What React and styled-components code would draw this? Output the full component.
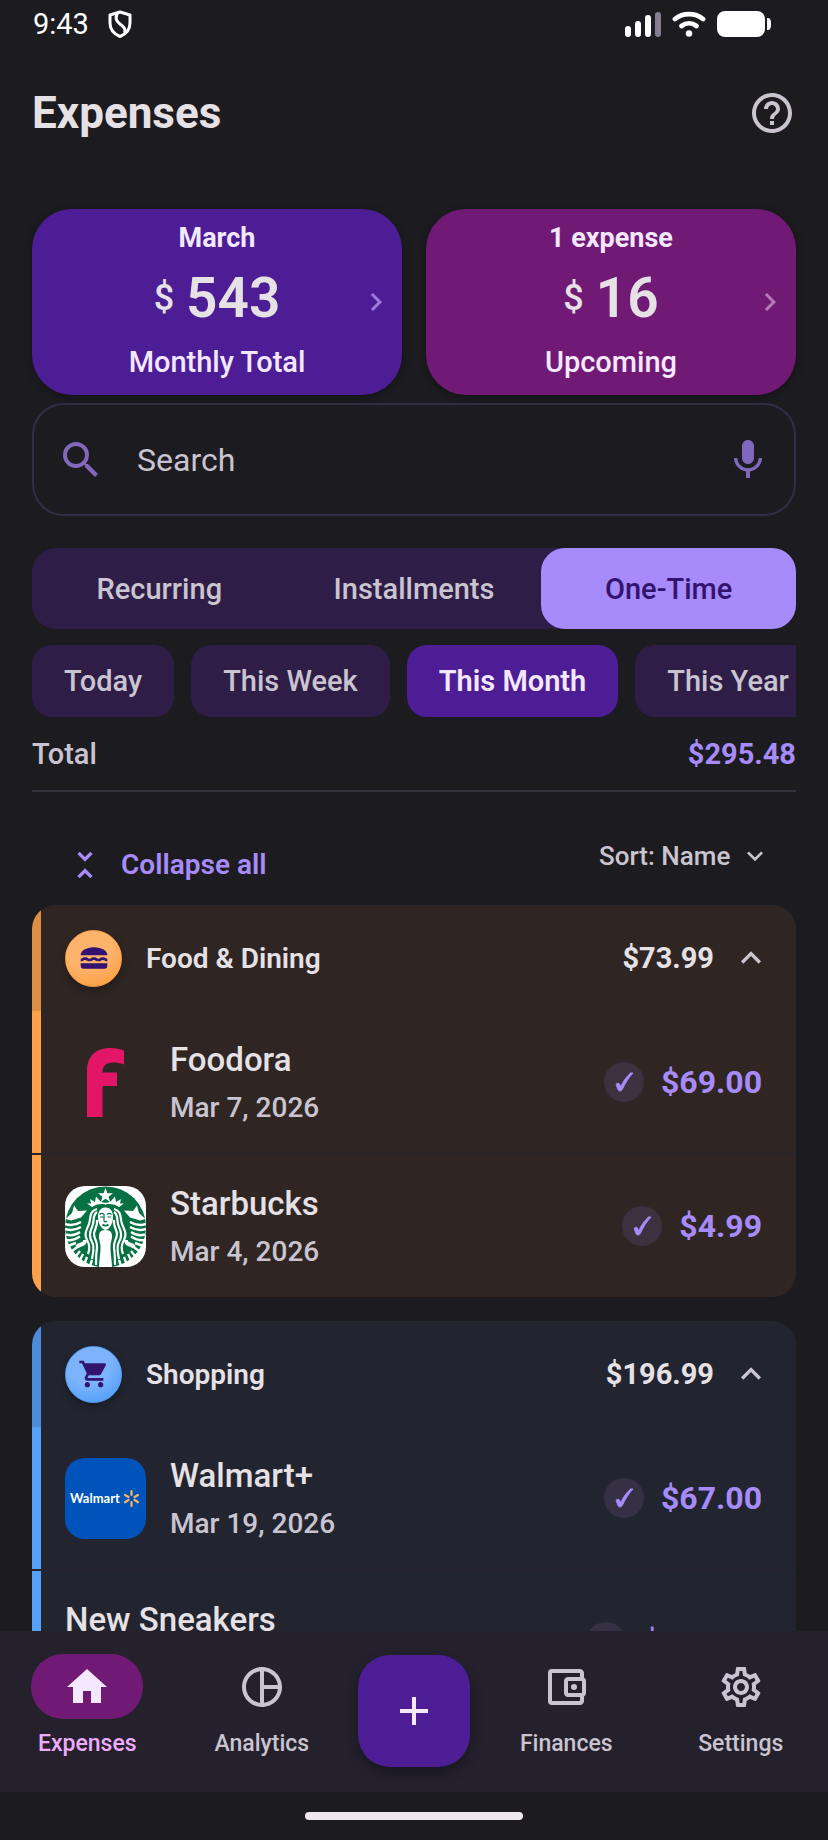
import React, { useState } from 'react';
import styled, { createGlobalStyle } from 'styled-components';
import {
  MdAdd,
  MdChevronRight,
  MdHelpOutline,
  MdHome,
  MdKeyboardArrowDown,
  MdKeyboardArrowUp,
  MdLunchDining,
  MdMic,
  MdOutlineAccountBalanceWallet,
  MdOutlineSettings,
  MdPieChartOutline,
  MdSearch,
  MdShoppingCart,
  MdUnfoldLess,
} from 'react-icons/md';

const tabs = ['Recurring', 'Installments', 'One-Time'];
const ranges = ['Today', 'This Week', 'This Month', 'This Year'];

const groups = [
  {
    name: 'Food & Dining',
    total: '$73.99',
    icon: MdLunchDining,
    color: '#ffa148',
    dim: '#de8f43',
    light: '#fdb36c',
    surface: '#2f2624',
    line: '#27242e',
    items: [
      { name: 'Foodora', date: 'Mar 7, 2026', amount: '$69.00', logo: FoodoraLogo },
      { name: 'Starbucks', date: 'Mar 4, 2026', amount: '$4.99', logo: StarbucksLogo },
    ],
  },
  {
    name: 'Shopping',
    total: '$196.99',
    icon: MdShoppingCart,
    color: '#57a1fb',
    dim: '#4c8cdb',
    light: '#7cb3fb',
    surface: '#222530',
    line: '#28242e',
    items: [
      { name: 'Walmart+', date: 'Mar 19, 2026', amount: '$67.00', logo: WalmartLogo },
      { name: 'New Sneakers', date: 'Mar 2, 2026', amount: '$129.99' },
    ],
  },
];

export default function App() {
  const [tab, setTab] = useState('One-Time');
  const [range, setRange] = useState('This Month');
  const [closed, setClosed] = useState([]);

  const toggleGroup = (name) => {
    setClosed(closed.includes(name) ? closed.filter((n) => n !== name) : [...closed, name]);
  };

  return (
    <Screen>
      <GlobalStyle />
      <StatusBar />
      <Main>
        <Header>
          <Title>Expenses</Title>
          <IconButton type="button" aria-label="Help">
            <MdHelpOutline size={48} />
          </IconButton>
        </Header>

        <Summary>
          <SummaryTile top="March" value="543" label="Monthly Total" color="#4c1d95" arrow="#9b7bdc" />
          <SummaryTile top="1 expense" value="16" label="Upcoming" color="#701a75" arrow="#b47bb8" />
        </Summary>

        <SearchBox>
          <MdSearch size={48} />
          <SearchInput type="search" placeholder="Search" aria-label="Search" />
          <IconButton type="button" aria-label="Voice search" $color="#8268bd">
            <MdMic size={48} />
          </IconButton>
        </SearchBox>

        <Segments>
          {tabs.map((t) => (
            <Segment key={t} type="button" aria-pressed={t === tab} $active={t === tab} onClick={() => setTab(t)}>
              {t}
            </Segment>
          ))}
        </Segments>

        <Chips>
          {ranges.map((r) => (
            <Chip key={r} type="button" aria-pressed={r === range} $active={r === range} onClick={() => setRange(r)}>
              {r}
            </Chip>
          ))}
        </Chips>

        <TotalRow>
          <span>Total</span>
          <TotalValue>$295.48</TotalValue>
        </TotalRow>

        <Toolbar>
          <CollapseButton type="button" onClick={() => setClosed(groups.map((g) => g.name))}>
            <MdUnfoldLess size={40} />
            Collapse all
          </CollapseButton>
          <SortLabel>
            <SortSelect aria-label="Sort expenses" defaultValue="name">
              <option value="name">Sort: Name</option>
              <option value="date">Sort: Date</option>
            </SortSelect>
            <MdKeyboardArrowDown size={32} />
          </SortLabel>
        </Toolbar>

        {groups.map((g) => (
          <Group key={g.name} group={g} open={!closed.includes(g.name)} onToggle={() => toggleGroup(g.name)} />
        ))}
      </Main>

      <Nav>
        <NavItem href="#expenses" $active>
          <NavPill $active><MdHome size={48} /></NavPill>
          Expenses
        </NavItem>
        <NavItem href="#analytics">
          <NavPill><MdPieChartOutline size={48} /></NavPill>
          Analytics
        </NavItem>
        <AddSlot>
          <AddButton type="button" aria-label="Add expense">
            <MdAdd size={48} />
          </AddButton>
        </AddSlot>
        <NavItem href="#finances">
          <NavPill><MdOutlineAccountBalanceWallet size={48} /></NavPill>
          Finances
        </NavItem>
        <NavItem href="#settings">
          <NavPill><MdOutlineSettings size={48} /></NavPill>
          Settings
        </NavItem>
      </Nav>
      <HomeArea>
        <HomeIndicator />
      </HomeArea>
    </Screen>
  );
}

function StatusBar() {
  return (
    <Status>
      <Clock>9:43</Clock>
      <svg width="24" height="28" viewBox="0 0 24 28" fill="none" stroke="#fff" strokeWidth="3" strokeLinejoin="round">
        <path d="M12 2 L22 5 V13 C22 19 18 24 12 26.500 C6 24 2 19 2 13 V5 Z" />
        <path d="M9.500 3.500 C6.500 8 8 11 12 14 C16 17 18 19 16.500 23" />
      </svg>
      <StatusIcons>
        <svg width="36" height="26" viewBox="0 0 36 26" fill="#fff">
          <rect x="0" y="15" width="6" height="11" rx="3" />
          <rect x="10" y="10" width="6" height="16" rx="3" />
          <rect x="20" y="4" width="6" height="22" rx="3" />
          <rect x="30" y="1" width="6" height="25" rx="3" fill="#857e8e" />
        </svg>
        <svg width="34" height="26" viewBox="0 0 34 26" fill="none" stroke="#fff" strokeWidth="4.800" strokeLinecap="round">
          <path d="M3 8 C11 1.500 23 1.500 31 8" />
          <path d="M9.500 15 C14 11.500 20 11.500 24.500 15" />
          <circle cx="17" cy="22.500" r="3.200" fill="#fff" stroke="none" />
        </svg>
        <svg width="54" height="28" viewBox="0 0 54 28" fill="#fff">
          <rect x="0" y="1" width="48" height="26" rx="8" />
          <path d="M50 8 C53 8 54 9 54 14 C54 19 53 20 50 20 Z" />
        </svg>
      </StatusIcons>
    </Status>
  );
}

function SummaryTile(props) {
  const { top, value, label, color, arrow } = props;
  return (
    <Tile type="button" $color={color}>
      <TileBody>
        <TileTop>{top}</TileTop>
        <TileValue><Currency>$</Currency>{value}</TileValue>
        <TileLabel>{label}</TileLabel>
      </TileBody>
      <MdChevronRight size={36} color={arrow} />
    </Tile>
  );
}

function Group(props) {
  const { group, open, onToggle } = props;
  const Icon = group.icon;
  return (
    <GroupCard $surface={group.surface}>
      <GroupHeader type="button" aria-expanded={open} $bar={group.dim} onClick={onToggle}>
        <CategoryBadge $color={group.color} $light={group.light}>
          <Icon size={32} />
        </CategoryBadge>
        <GroupName>{group.name}</GroupName>
        <GroupTotal>{group.total}</GroupTotal>
        {open ? <MdKeyboardArrowUp size={40} /> : <MdKeyboardArrowDown size={40} />}
      </GroupHeader>
      {open ? group.items.map((item, i) => {
        const Logo = item.logo;
        return (
          <React.Fragment key={item.name}>
            {i > 0 ? <Divider $line={group.line} /> : null}
            <Row $bar={group.color}>
              {Logo ? <LogoBox><Logo /></LogoBox> : null}
              <RowText>
                <RowName>{item.name}</RowName>
                <RowDate>{item.date}</RowDate>
              </RowText>
              <Paid>
                <svg width="20" height="22" viewBox="0 0 20 22" fill="currentColor" stroke="currentColor" strokeWidth="1" role="img" aria-label="Paid">
                  <path d="M2 13.500 C3.500 11.800 5.200 11.800 5.700 13.500 L6.700 16 C9 10.500 12.500 5.500 16.500 2 L19 2 C14.500 6.800 11 12.500 8.300 18.500 C7.500 20.300 4.700 20.400 4.100 18.700 Z" />
                </svg>
              </Paid>
              <RowAmount>{item.amount}</RowAmount>
            </Row>
          </React.Fragment>
        );
      }) : null}
    </GroupCard>
  );
}

function FoodoraLogo() {
  return (
    <svg width="81" height="81" viewBox="0 0 81 81" fill="#e21566">
      <path d="M22 29 C22 13 32 6 46 6 C51 6 55 7 59 8.500 V22.500 C55 21 51 20.500 48 20.500 C41 20.500 37.500 24 37.500 30.500 H52 V44 H37.500 V75 H22 Z" />
    </svg>
  );
}

// left half of the siren, mirrored for the right one
function SirenHalf() {
  return (
    <g>
      <path d="M9 19.500 L13 25 L22 24.500 L16 31.500 L6 34.500 L0.500 33 L7 27 Z" fill="#fff" stroke="none" />
      <path d="M0 38 C6 40 11 39 16 36" />
      <path d="M0 43 C6 45 11 44 16 41" />
      <path d="M1 48.500 C6 50 11 49 15 46" />
      <path d="M2 54 C7 55 11 53 15 50.500" />
      <path d="M4 59.500 L11 57 M7 65 L13 60.500 M11 70 L15 65 M15 74 L18 68 M19.500 77.500 L22 71 M25 80 L27 74" />
      <path d="M12 61 C15 57 20 60 20 54" strokeWidth="4" />
      <path d="M32 23 C24 25 26 32 24 38 C21 45 19 48 22 54 C25 59 25 63 23 68" strokeWidth="2.200" />
      <path d="M32 26 C27 29 30 35 27 41 C24 47 24 51 27 56 C30 61 28 67 27 73" strokeWidth="2.200" />
      <path d="M32 34 C33 40 29 44 29 48 C29 53 33 56 32 62 C31 68 31 73 31 79" strokeWidth="2.200" />
      <path d="M27 21 L22 17.500 L26 17.500 L25 13 L30 16 L31 10.500 L35 15 L38 16.500 L41 17 V18.500 C35 17.500 31 18.500 27 21 Z" fill="#fff" stroke="none" />
    </g>
  );
}

function StarbucksLogo() {
  return (
    <svg width="81" height="81" viewBox="0 0 81 81">
      <rect width="81" height="81" fill="#fff" />
      <circle cx="40.500" cy="41" r="40.500" fill="#067143" />
      <g fill="none" stroke="#fff" strokeWidth="2.400">
        <SirenHalf />
        <g transform="translate(81 0) scale(-1 1)"><SirenHalf /></g>
      </g>
      <path d="M40.500 2 L42.400 7.300 H48 L43.500 10.700 L45.200 16 L40.500 12.800 L35.800 16 L37.500 10.700 L33 7.300 H38.600 Z" fill="#fff" />
      <path d="M40.500 21.500 C46 21.500 48 26 48 31 C48 37 45 43 40.500 44 C36 43 33 37 33 31 C33 26 35 21.500 40.500 21.500 Z" fill="#fff" />
      <path d="M36 45 C39 43.500 42 43.500 45 45 C49 49 46 55 45.500 59 C45 66 47 74 47 81 H34 C34 74 36 66 35.500 59 C35 55 32 49 36 45 Z" fill="#fff" />
      <g fill="none" stroke="#067143" strokeWidth="1.200">
        <path d="M34.500 28.500 C36 27 38 27 39 28.500 V35 C40 36 41 36 42 35" />
        <path d="M42 28.500 C43.500 27 45 27 46.500 28.500" />
        <path d="M35 31 H38.500 M42.500 31 H46" />
        <path d="M37.500 38.500 C39.500 40 41.500 40 43.500 38.500" strokeWidth="1.600" />
      </g>
    </svg>
  );
}

function WalmartLogo() {
  return (
    <svg width="81" height="81" viewBox="0 0 81 81">
      <rect width="81" height="81" fill="#0053bb" />
      <text x="5" y="45" fill="#fff" fontFamily='Lato, "Noto Sans", sans-serif' fontSize="13" fontWeight="700">Walmart</text>
      <g stroke="#f7b55d" strokeWidth="2.200" strokeLinecap="round">
        <path d="M66.500 33 V37 M66.500 44 V48 M60 37 L63.500 39 M69.500 42 L73 44.200 M73 37 L69.500 39 M63.500 42 L60 44.200" />
      </g>
    </svg>
  );
}

const GlobalStyle = createGlobalStyle`
  * {
    box-sizing: border-box;
  }
  body {
    margin: 0;
    background: #1c1b1f;
    color: #e6e1e5;
    font-family: Roboto, "Liberation Sans", sans-serif;
  }
  button, input, select {
    font-family: inherit;
  }
  svg {
    display: block;
    flex: none;
  }
`;

const Screen = styled.div`
  display: flex;
  flex-direction: column;
  height: 100vh;
  overflow: hidden;
`;

const Status = styled.div`
  display: flex;
  align-items: center;
  flex: none;
  height: 48px;
  padding: 0 57px 0 33px;
  color: #fff;
`;

const Clock = styled.span`
  margin-right: 19px;
  font-size: 29px;
  line-height: 32px;
`;

const StatusIcons = styled.div`
  display: flex;
  align-items: center;
  gap: 11px;
  margin-left: auto;
`;

const Main = styled.main`
  flex: 1;
  min-height: 0;
  padding: 0 32px;
  overflow: hidden;
`;

const Header = styled.header`
  display: flex;
  align-items: center;
  justify-content: space-between;
  height: 130px;
  margin-bottom: 31px;
`;

const Title = styled.h1`
  margin: 0;
  font-size: 44px;
  line-height: 52px;
  font-weight: 700;
`;

const IconButton = styled.button`
  padding: 0;
  border: 0;
  background: none;
  color: ${(p) => p.$color || '#cac4d0'};
`;

const Summary = styled.section`
  display: flex;
  gap: 24px;
`;

const Tile = styled.button`
  display: grid;
  grid-template-columns: 36px 1fr 36px;
  align-items: center;
  flex: 1;
  padding: 8px;
  border: 0;
  border-radius: 40px;
  background: ${(p) => p.$color};
  color: #f3e8ff;
  box-shadow: 0 2px 8px rgba(0, 0, 0, 0.35);
`;

const TileBody = styled.span`
  display: flex;
  flex-direction: column;
  align-items: center;
  grid-column: 2;
`;

const TileTop = styled.span`
  font-size: 27px;
  line-height: 42px;
  font-weight: 700;
`;

const TileValue = styled.span`
  display: flex;
  align-items: center;
  gap: 12px;
  color: #e6e1e5;
  font-size: 55px;
  line-height: 78px;
  font-weight: 600;
`;

const Currency = styled.span`
  font-size: 36px;
  font-weight: 500;
`;

const TileLabel = styled.span`
  font-size: 29px;
  line-height: 50px;
  font-weight: 500;
`;

const SearchBox = styled.div`
  display: flex;
  align-items: center;
  gap: 32px;
  height: 113px;
  margin-top: 8px;
  padding: 0 22px 0 23px;
  border: 2px solid #332e45;
  border-radius: 32px;
  color: #8268bd;
`;

const SearchInput = styled.input`
  flex: 1;
  min-width: 0;
  padding: 0;
  border: 0;
  outline: 0;
  background: none;
  color: #e6e1e5;
  font-size: 32px;
  line-height: 40px;

  &::placeholder {
    color: #cac4d0;
    opacity: 1;
  }
`;

const Segments = styled.div`
  display: flex;
  margin-top: 32px;
  border-radius: 24px;
  background: #2d1d47;
`;

const Segment = styled.button`
  flex: 1 1 0;
  height: 81px;
  padding: 0;
  border: 0;
  border-radius: 24px;
  background: ${(p) => (p.$active ? '#a78bfa' : 'transparent')};
  color: ${(p) => (p.$active ? '#32136f' : '#cac4d0')};
  font-size: 29px;
  font-weight: 500;
`;

const Chips = styled.div`
  display: flex;
  gap: 17px;
  margin-top: 16px;
  overflow: hidden;
`;

const Chip = styled.button`
  flex: none;
  height: 72px;
  padding: 0 32px;
  border: 0;
  border-radius: 20px;
  background: ${(p) => (p.$active ? '#4c1d95' : '#2d1d47')};
  color: ${(p) => (p.$active ? '#f3e8ff' : '#cac4d0')};
  font-size: 29px;
  font-weight: ${(p) => (p.$active ? 600 : 500)};
`;

const TotalRow = styled.div`
  display: flex;
  align-items: center;
  justify-content: space-between;
  height: 75px;
  border-bottom: 2px solid #34303c;
  color: #cac4d0;
  font-size: 29px;
  font-weight: 500;
`;

const TotalValue = styled.strong`
  color: #a78bfa;
  font-weight: 700;
`;

const Toolbar = styled.div`
  display: flex;
  align-items: flex-start;
  justify-content: space-between;
  padding: 32px 25px 0 33px;
`;

const CollapseButton = styled.button`
  display: flex;
  align-items: center;
  gap: 16px;
  height: 81px;
  padding: 0;
  border: 0;
  background: none;
  color: #a78bfa;
  font-size: 28px;
  font-weight: 600;
`;

const SortLabel = styled.label`
  display: flex;
  align-items: center;
  gap: 8px;
  height: 64px;
  color: #cac4d0;
`;

const SortSelect = styled.select`
  padding: 0;
  border: 0;
  appearance: none;
  background: none;
  color: inherit;
  font-size: 26px;
  font-weight: 500;
`;

const GroupCard = styled.section`
  margin-bottom: 24px;
  border-radius: 24px;
  background: ${(p) => p.$surface};
  overflow: hidden;
`;

const GroupHeader = styled.button`
  display: flex;
  align-items: center;
  width: 100%;
  height: 106px;
  padding: 0 25px 0 24px;
  border: 0;
  border-left: 9px solid ${(p) => p.$bar};
  background: none;
  color: #cac4d0;
  text-align: left;
`;

const CategoryBadge = styled.span`
  display: flex;
  align-items: center;
  justify-content: center;
  width: 57px;
  height: 57px;
  border: 1px solid ${(p) => p.$color};
  border-radius: 50%;
  background: radial-gradient(circle at 40% 25%, ${(p) => p.$light} 0, ${(p) => p.$light} 45%, ${(p) => p.$color} 80%);
  color: #32136f;
  box-shadow: 0 4px 8px rgba(0, 0, 0, 0.3);
`;

const GroupName = styled.span`
  flex: 1;
  margin-left: 24px;
  color: #e6e1e5;
  font-size: 28px;
  font-weight: 600;
`;

const GroupTotal = styled.span`
  margin-right: 17px;
  color: #e6e1e5;
  font-size: 29px;
  font-weight: 700;
`;

const Divider = styled.div`
  height: 2px;
  background: ${(p) => p.$line};
`;

const Row = styled.article`
  display: flex;
  align-items: center;
  height: 142px;
  padding: 0 34px 0 24px;
  border-left: 9px solid ${(p) => p.$bar};
`;

const LogoBox = styled.div`
  flex: none;
  margin-right: 24px;
  border-radius: 20px;
  overflow: hidden;
`;

const RowText = styled.div`
  flex: 1;
`;

const RowName = styled.div`
  font-size: 33px;
  line-height: 52px;
  font-weight: 500;
`;

const RowDate = styled.div`
  color: #cac4d0;
  font-size: 28px;
  line-height: 44px;
  font-weight: 500;
`;

const Paid = styled.span`
  display: flex;
  align-items: center;
  justify-content: center;
  width: 40px;
  height: 40px;
  margin-right: 17px;
  border-radius: 50%;
  background: rgba(74, 60, 88, 0.5);
  color: #a78bfa;
`;

const RowAmount = styled.span`
  color: #a78bfa;
  font-size: 32px;
  font-weight: 700;
`;

const Nav = styled.nav`
  display: flex;
  flex: none;
  height: 161px;
  padding-top: 23px;
  background: #24212d;
`;

const NavItem = styled.a`
  display: flex;
  flex-direction: column;
  align-items: center;
  flex: 1 1 0;
  gap: 9px;
  color: ${(p) => (p.$active ? '#f0abfc' : '#cac4d0')};
  font-size: 23px;
  line-height: 32px;
  font-weight: 500;
  text-decoration: none;
`;

const NavPill = styled.span`
  display: flex;
  align-items: center;
  justify-content: center;
  width: 112px;
  height: 65px;
  border-radius: 32px;
  background: ${(p) => (p.$active ? '#701a75' : 'transparent')};
  color: ${(p) => (p.$active ? '#f3e8ff' : '#cac4d0')};
`;

const AddSlot = styled.div`
  flex: none;
  padding: 1px 9px;
`;

const AddButton = styled.button`
  display: flex;
  align-items: center;
  justify-content: center;
  width: 112px;
  height: 112px;
  padding: 0;
  border: 0;
  border-radius: 32px;
  background: #4c1d95;
  color: #f3e8ff;
  box-shadow: 0 6px 12px rgba(0, 0, 0, 0.35);
`;

const HomeArea = styled.div`
  display: flex;
  align-items: center;
  justify-content: center;
  flex: none;
  height: 48px;
`;

const HomeIndicator = styled.div`
  width: 218px;
  height: 8px;
  border-radius: 4px;
  background: #ece8ec;
`;
